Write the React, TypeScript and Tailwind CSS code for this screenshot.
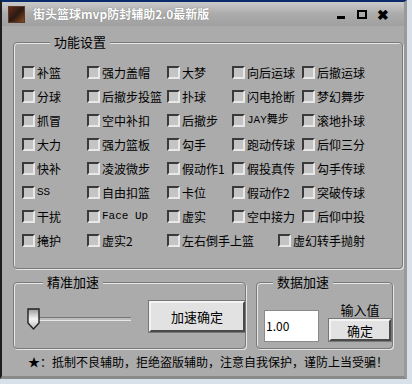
import React from "react";

const font = {
  fontFamily: '"SimSun", "Noto Sans CJK SC", "Liberation Sans", sans-serif',
};

type Item = { label: string; w: string };

const rows: Item[][] = [
  [
    { label: "补篮", w: "w-[65px]" },
    { label: "强力盖帽", w: "w-[80px]" },
    { label: "大梦", w: "w-[65px]" },
    { label: "向后运球", w: "w-[70px]" },
    { label: "后撤运球", w: "w-[80px]" },
  ],
  [
    { label: "分球", w: "w-[65px]" },
    { label: "后撤步投篮", w: "w-[80px]" },
    { label: "扑球", w: "w-[65px]" },
    { label: "闪电抢断", w: "w-[70px]" },
    { label: "梦幻舞步", w: "w-[80px]" },
  ],
  [
    { label: "抓冒", w: "w-[65px]" },
    { label: "空中补扣", w: "w-[80px]" },
    { label: "后撤步", w: "w-[65px]" },
    { label: "JAY舞步", w: "w-[70px]" },
    { label: "滚地扑球", w: "w-[80px]" },
  ],
  [
    { label: "大力", w: "w-[65px]" },
    { label: "强力篮板", w: "w-[80px]" },
    { label: "勾手", w: "w-[65px]" },
    { label: "跑动传球", w: "w-[70px]" },
    { label: "后仰三分", w: "w-[80px]" },
  ],
  [
    { label: "快补", w: "w-[65px]" },
    { label: "凌波微步", w: "w-[80px]" },
    { label: "假动作1", w: "w-[65px]" },
    { label: "假投真传", w: "w-[70px]" },
    { label: "勾手传球", w: "w-[80px]" },
  ],
  [
    { label: "SS", w: "w-[65px]" },
    { label: "自由扣篮", w: "w-[80px]" },
    { label: "卡位", w: "w-[65px]" },
    { label: "假动作2", w: "w-[70px]" },
    { label: "突破传球", w: "w-[80px]" },
  ],
  [
    { label: "干扰", w: "w-[65px]" },
    { label: "Face Up", w: "w-[80px]" },
    { label: "虚实", w: "w-[65px]" },
    { label: "空中接力", w: "w-[70px]" },
    { label: "后仰中投", w: "w-[80px]" },
  ],
  [
    { label: "掩护", w: "w-[65px]" },
    { label: "虚实2", w: "w-[80px]" },
    { label: "左右倒手上篮", w: "w-[111px]" },
    { label: "虚幻转手抛射", w: "w-[100px]" },
  ],
];

function Check({ label, w }: Item) {
  const mono = /^[A-Za-z ]+$/.test(label) || label.startsWith("JAY");
  return (
    <div className={`flex items-center gap-[2px] ${w}`}>
      <span className="h-[13px] w-[13px] shrink-0 border-2 border-t-[#3a3a3a] border-l-[#3a3a3a] border-b-[#e8e8e8] border-r-[#e8e8e8] bg-[#c4c4c4]" />
      <span
        className="whitespace-nowrap text-[12px] leading-none text-black"
        style={
          mono
            ? { fontFamily: '"Liberation Mono", "Noto Sans CJK SC", monospace', fontSize: "11px" }
            : undefined
        }
      >
        {label}
      </span>
    </div>
  );
}

function GroupBox({
  title,
  className,
  titleClass,
  children,
}: {
  title: string;
  className: string;
  titleClass: string;
  children: React.ReactNode;
}) {
  return (
    <div
      className={`relative rounded-[4px] border border-[#7a7a7a] shadow-[inset_1px_1px_0_#e6e6e6,1px_1px_0_#e6e6e6] ${className}`}
    >
      <span
        className={`absolute -top-[8px] bg-[#ababab] px-[4px] text-[13px] leading-none text-black ${titleClass}`}
      >
        {title}
      </span>
      {children}
    </div>
  );
}

export default function App() {
  return (
    <div className="h-[384px] w-[412px] overflow-hidden bg-[#d8e0ea]" style={font}>
      <div className="flex h-[379px] w-[407px] flex-col border-t-2 border-l-2 border-r-[3px] border-b-[3px] border-t-[#0a2a6a] border-l-[#1d1d1d] border-r-[#9a9a9a] border-b-[#8a8a8a] bg-[#ababab]">
        {/* title bar */}
        <div className="flex h-[24px] items-center bg-gradient-to-b from-[#cacaca] via-[#ababab] to-[#a0a0a0] pl-[6px] pr-[12px]">
          <div className="mr-[8px] h-[17px] w-[17px] bg-gradient-to-br from-[#6a2a1a] via-[#2a1a10] to-[#8a4a20] border border-[#5a3a2a]" />
          <span className="text-[12px] font-bold leading-none text-white [text-shadow:0_0_1px_#666]">
            街头篮球mvp防封辅助2.0最新版
          </span>
          <div className="ml-auto flex items-center gap-[3px]">
            <span className="flex h-[16px] w-[18px] items-end justify-center pb-[3px]">
              <span className="h-[3px] w-[8px] bg-black" />
            </span>
            <span className="flex h-[16px] w-[18px] items-center justify-center">
              <span className="h-[9px] w-[10px] border-2 border-black" />
            </span>
            <span className="flex h-[16px] w-[18px] items-center justify-center text-[14px] font-bold leading-none text-black">
              ✖
            </span>
          </div>
        </div>

        <div className="flex flex-col px-[11px] pt-[16px]">
          <GroupBox
            title="功能设置"
            className="h-[227px] w-[390px] pt-[23px] pl-[8px]"
            titleClass="left-[36px]"
          >
            <div className="flex flex-col gap-[11px]">
              {rows.map((r, i) => (
                <div key={i} className="flex">
                  {r.map((it) => (
                    <Check key={it.label} {...it} />
                  ))}
                </div>
              ))}
            </div>
          </GroupBox>

          <div className="mt-[13px] flex gap-[10px]">
            <GroupBox
              title="精准加速"
              className="flex h-[67px] w-[237px] items-center gap-[18px] pl-[13px]"
              titleClass="left-[29px]"
            >
              <div className="relative mt-[6px] h-[22px] w-[104px]">
                <div className="absolute left-[2px] right-0 top-[9px] h-[4px] border-t border-[#777] border-b border-b-[#e6e6e6] bg-[#bdbdbd]" />
                <svg className="absolute left-[0px] top-0" width="13" height="22" viewBox="0 0 13 22">
                  <defs>
                    <linearGradient id="th" x1="0" y1="0" x2="0" y2="1">
                      <stop offset="0" stopColor="#999" />
                      <stop offset="0.5" stopColor="#f4f4f4" />
                      <stop offset="1" stopColor="#bbb" />
                    </linearGradient>
                  </defs>
                  <path d="M1 1 H12 V15 L6.5 21 L1 15 Z" fill="url(#th)" stroke="#222" strokeWidth="1.4" />
                </svg>
              </div>
              <button className="mt-[2px] h-[31px] w-[96px] border-2 border-t-[#f4f4f4] border-l-[#f4f4f4] border-b-[#4a4a4a] border-r-[#4a4a4a] bg-[#e2e2e2] text-[13px] text-black shadow-[0_0_0_1px_#777]">
                加速确定
              </button>
            </GroupBox>

            <GroupBox
              title="数据加速"
              className="flex h-[67px] w-[143px] items-end gap-[10px] pb-[6px] pl-[7px]"
              titleClass="left-[16px]"
            >
              <div className="flex h-[32px] w-[55px] items-center border border-[#8a8a8a] bg-white pl-[1px] text-[12px] text-black">
                1.00
              </div>
              <div className="mb-[1px] flex flex-col items-center">
                <span className="mb-[3px] text-[13px] leading-none text-black">输入值</span>
                <button className="h-[22px] w-[62px] border-2 border-t-[#f4f4f4] border-l-[#f4f4f4] border-b-[#4a4a4a] border-r-[#4a4a4a] bg-[#e2e2e2] text-[13px] leading-none text-black shadow-[0_0_0_1px_#777]">
                  确定
                </button>
              </div>
            </GroupBox>
          </div>

          <p className="mt-[7px] whitespace-nowrap pl-[15px] text-[12px] leading-none text-black">
            ★：抵制不良辅助，拒绝盗版辅助，注意自我保护，谨防上当受骗！
          </p>
        </div>
      </div>
    </div>
  );
}
